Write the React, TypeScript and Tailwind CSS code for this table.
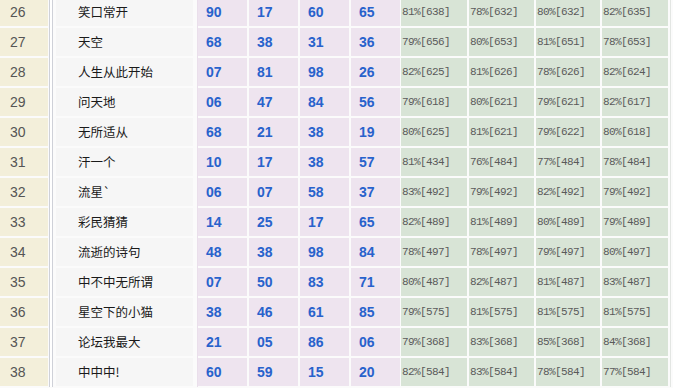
import React from 'react';

type Row = {
  no: number;
  name: string;
  nums: string[];
  rates: string[];
};

const rows: Row[] = [
  { no: 26, name: '笑口常开', nums: ['90', '17', '60', '65'], rates: ['81%[638]', '78%[632]', '80%[632]', '82%[635]'] },
  { no: 27, name: '天空', nums: ['68', '38', '31', '36'], rates: ['79%[656]', '80%[653]', '81%[651]', '78%[653]'] },
  { no: 28, name: '人生从此开始', nums: ['07', '81', '98', '26'], rates: ['82%[625]', '81%[626]', '78%[626]', '82%[624]'] },
  { no: 29, name: '问天地', nums: ['06', '47', '84', '56'], rates: ['79%[618]', '80%[621]', '79%[621]', '82%[617]'] },
  { no: 30, name: '无所适从', nums: ['68', '21', '38', '19'], rates: ['80%[625]', '81%[621]', '79%[622]', '80%[618]'] },
  { no: 31, name: '汗一个', nums: ['10', '17', '38', '57'], rates: ['81%[434]', '76%[484]', '77%[484]', '78%[484]'] },
  { no: 32, name: '流星`', nums: ['06', '07', '58', '37'], rates: ['83%[492]', '79%[492]', '82%[492]', '79%[492]'] },
  { no: 33, name: '彩民猜猜', nums: ['14', '25', '17', '65'], rates: ['82%[489]', '81%[489]', '80%[489]', '79%[489]'] },
  { no: 34, name: '流逝的诗句', nums: ['48', '38', '98', '84'], rates: ['78%[497]', '78%[497]', '79%[497]', '80%[497]'] },
  { no: 35, name: '中不中无所谓', nums: ['07', '50', '83', '71'], rates: ['80%[487]', '82%[487]', '81%[487]', '83%[487]'] },
  { no: 36, name: '星空下的小猫', nums: ['38', '46', '61', '85'], rates: ['79%[575]', '81%[575]', '81%[575]', '81%[575]'] },
  { no: 37, name: '论坛我最大', nums: ['21', '05', '86', '06'], rates: ['79%[368]', '83%[368]', '85%[368]', '84%[368]'] },
  { no: 38, name: '中中中!', nums: ['60', '59', '15', '20'], rates: ['82%[584]', '83%[584]', '78%[584]', '77%[584]'] },
];

// widths of the four rate columns
const rateWidths = ['w-[66px]', 'w-[65px]', 'w-[64px]', 'w-[66px]'];

export default function App() {
  return (
    <div className="w-[673px] h-[388px] overflow-hidden bg-[#fbfbfb]">
      <div className="-mt-[3px] flex flex-col">
        {rows.map((r) => (
          <div key={r.no} className="flex h-[30px] items-stretch">
            {/* row number */}
            <div className="my-px w-[48px] bg-[#f3efda] pl-[10px] flex items-center text-[14px] text-[#555] font-['Liberation_Sans',sans-serif]">
              {r.no}
            </div>

            {/* double divider */}
            <div className="w-[8px] flex">
              <div className="ml-px w-[4px] border-x border-[#cfd1d8] bg-white" />
            </div>

            {/* user name */}
            <div className="my-px w-[137px] bg-[#f6f6f6] pl-[22px] flex items-center text-[12.5px] text-[#1a1a1a] font-['Noto_Sans_CJK_SC',sans-serif]">
              {r.name}
            </div>

            <div className="w-[5px] flex justify-end">
              <div className="w-px bg-[#eadfeb]" />
            </div>

            {/* picked numbers */}
            <div className="flex gap-[2px]">
              {r.nums.map((n, i) => (
                <div
                  key={i}
                  className="my-px w-[49px] bg-[#eee4ef] pl-[8px] flex items-center text-[14px] font-bold text-[#2862cc] font-['Liberation_Sans',sans-serif]"
                >
                  {n}
                </div>
              ))}
            </div>

            {/* hit rates */}
            <div className="ml-px flex gap-[2px]">
              {r.rates.map((t, i) => (
                <div
                  key={i}
                  className={`my-px ${rateWidths[i]} bg-[#d8e4d6] pl-px flex items-center text-[11px] tracking-[-0.6px] text-[#5a5a5a] font-['Liberation_Mono',monospace]`}
                >
                  {t}
                </div>
              ))}
            </div>

            <div className="flex-1 flex">
              <div className="ml-[2px] w-px bg-[#e3e6e3]" />
            </div>
          </div>
        ))}
      </div>
    </div>
  );
}
